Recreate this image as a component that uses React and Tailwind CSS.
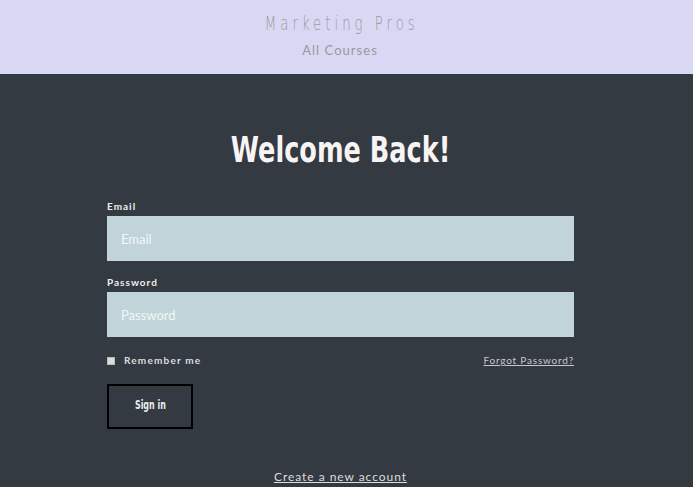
export default function App() {
  return (
    <div className="min-h-[487px] bg-[#343a42] font-['Lato','Liberation_Sans',sans-serif]">
      <header className="h-[74px] bg-[#d9d8f4] flex flex-col items-center pt-[11px] pr-[13px]">
        <h1 className="inline-block scale-x-[0.7] text-[19px] leading-[24px] tracking-[0.3em] text-[#9a9a9a] font-['DejaVu_Sans',sans-serif] font-light pl-[0.3em]">
          Marketing Pros
        </h1>
        <a href="#" className="mt-[7px] text-[13px] leading-[16px] tracking-[0.08em] text-[#9a9a9a]">All Courses</a>
      </header>

      <main className="w-[467px] ml-[107px] pt-[55px]">
        <div className="text-center">
          <h2 className="inline-block scale-x-[0.71] text-[36px] leading-[42px] font-bold text-[#f9f4f4] font-['DejaVu_Sans',sans-serif]">
            Welcome Back!
          </h2>
        </div>

        <form className="mt-[29px]">
          <label className="block text-[10px] leading-[13px] font-bold tracking-[0.1em] text-[#eeeeee]">Email</label>
          <input
            placeholder="Email"
            className="mt-[3px] block w-full h-[45px] bg-[#c0d4da] px-[14px] text-[13px] placeholder:text-[#f4f7f8] outline-none"
          />

          <label className="block mt-[15px] text-[10px] leading-[13px] font-bold tracking-[0.1em] text-[#eeeeee]">Password</label>
          <input
            type="password"
            placeholder="Password"
            className="mt-[3px] block w-full h-[45px] bg-[#c0d4da] px-[14px] text-[13px] placeholder:text-[#f4f7f8] outline-none"
          />

          <div className="mt-[16px] flex items-center justify-between">
            <label className="flex items-center gap-[9px] text-[10px] font-bold tracking-[0.12em] text-[#dddddd]">
              <span className="w-[8px] h-[8px] bg-[#dcdcdc] border border-[#bbbbbb]"></span>
              Remember me
            </label>
            <a href="#" className="text-[10px] tracking-[0.08em] underline text-[#c9c9c9]">Forgot Password?</a>
          </div>

          <button
            type="button"
            className="mt-[16px] w-[86px] h-[45px] border-2 border-black text-[#eeeeee] flex items-center justify-center pb-[3px]"
          >
            <span className="inline-block scale-x-[0.66] text-[12px] leading-[14px] font-bold font-['DejaVu_Sans',sans-serif]">Sign in</span>
          </button>
        </form>

        <div className="mt-[34px] text-center">
          <a href="#" className="text-[12px] tracking-[0.08em] underline text-[#dddddd]">Create a new account</a>
        </div>
      </main>
    </div>
  );
}
